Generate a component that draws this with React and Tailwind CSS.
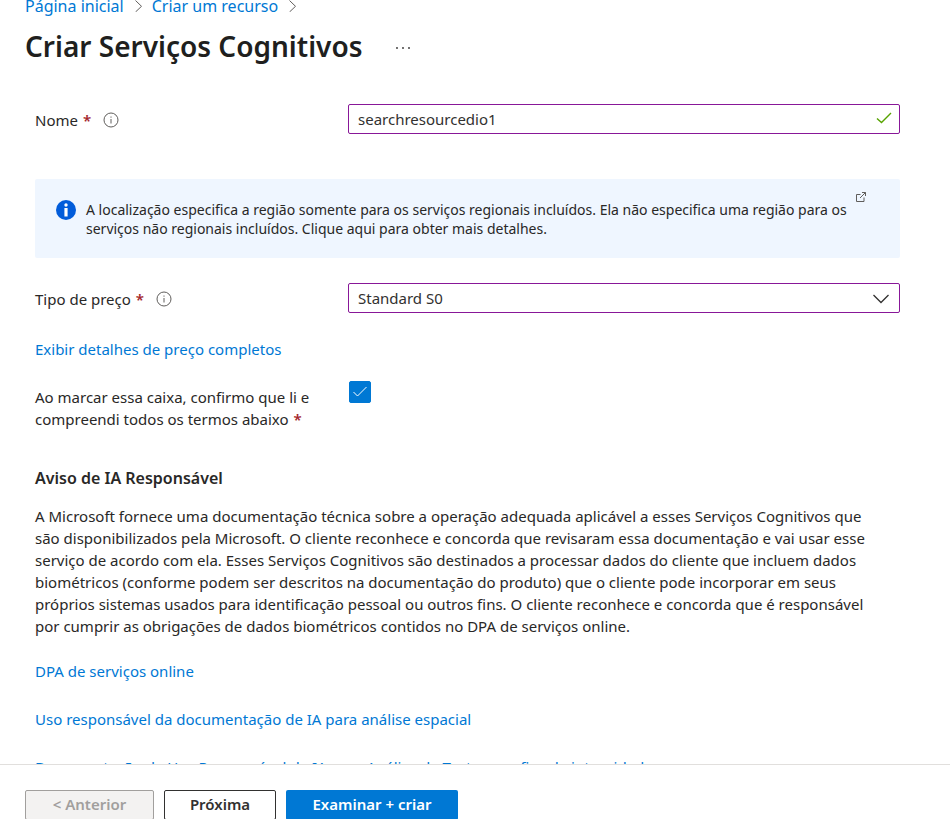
import React from "react";

const linkClass = "text-[#0078d4] hover:underline";

function Required() {
  return <span className="ml-[5px] font-semibold text-[#a4262c]">*</span>;
}

function InfoIcon() {
  return (
    <svg className="ml-3 size-4 shrink-0" viewBox="0 0 16 16" fill="none" stroke="#605e5c" aria-hidden="true">
      <circle cx="8" cy="8" r="7" />
      <path d="M8 7v4.5M8 4.5v1.2" />
    </svg>
  );
}

function Separator() {
  return (
    <svg className="mx-2 h-3 w-3 shrink-0" viewBox="0 0 12 12" fill="none" stroke="#605e5c" aria-hidden="true">
      <path d="M3.5 0.5L9.5 6.3L3.5 12" />
    </svg>
  );
}

function Field({ id, label, children }) {
  return (
    <div className="flex items-center">
      <div className="flex w-[313px] shrink-0 items-center pt-0.5">
        <label htmlFor={id}>
          {label}
          <Required />
        </label>
        <InfoIcon />
      </div>
      <div className="grid min-w-0 flex-1 items-center">{children}</div>
    </div>
  );
}

const fieldClass =
  "col-start-1 row-start-1 h-[30px] w-full appearance-none rounded-xs border border-[#881798] bg-white px-[9px] text-[15px] text-[#323130] outline-none";

export default function App() {
  return (
    <div className="flex h-screen flex-col overflow-hidden bg-white font-['Noto_Sans','Segoe_UI',sans-serif] text-[15px] leading-[22px] text-[#292827]">
      <header className="shrink-0 px-[25px]">
        <nav aria-label="Trilha" className="flex h-3 items-center text-base leading-3">
          <a href="#inicio" className={linkClass}>Página inicial</a>
          <Separator />
          <a href="#recurso" className={linkClass}>Criar um recurso</a>
          <Separator />
        </nav>
        <div className="mt-4 flex items-center gap-8">
          <h1 className="text-[28px] leading-9 font-semibold text-[#201f1e]">Criar Serviços Cognitivos</h1>
          <button type="button" aria-label="Mais opções" className="flex pt-1">
            <svg className="h-4 w-4" viewBox="0 0 16 16" fill="#323130" aria-hidden="true">
              <circle cx="2" cy="8" r="0.9" />
              <circle cx="8" cy="8" r="0.9" />
              <circle cx="14" cy="8" r="0.9" />
            </svg>
          </button>
        </div>
      </header>

      <main className="min-h-0 flex-1 overflow-hidden pt-10 pr-[50px] pl-[35px]">
        <Field id="nome" label="Nome">
          <input id="nome" type="text" defaultValue="searchresourcedio1" className={fieldClass} />
          <svg className="pointer-events-none col-start-1 row-start-1 mr-2 h-4 w-4 justify-self-end" viewBox="0 0 16 16" fill="none" stroke="#57a300" strokeWidth="1.4" aria-hidden="true">
            <path d="M1 7.5L5.5 11.5L15 2" />
          </svg>
        </Field>

        <div className="mt-[45px] flex rounded-xs bg-[#eff6ff] px-[21px] pt-[21px] pb-5">
          <svg className="size-5 shrink-0" viewBox="0 0 20 20" aria-hidden="true">
            <circle cx="10" cy="10" r="10" fill="#015cda" />
            <circle cx="10" cy="5" r="1.7" fill="#fff" />
            <path d="M8.4 8h3.2v8.5H8.4z" fill="#fff" />
          </svg>
          <p className="ml-2.5 text-sm leading-[19px]">
            A localização especifica a região somente para os serviços regionais incluídos. Ela não especifica uma região para os
            <br />
            serviços não regionais incluídos. Clique aqui para obter mais detalhes.
          </p>
          <a href="#detalhes" aria-label="Abrir em nova guia" className="-mt-2 ml-2 flex size-3 shrink-0">
            <svg className="size-3" viewBox="0 0 12 12" fill="none" stroke="#605e5c" aria-hidden="true">
              <path d="M5.5 2.5H1.5v7h7.5V5.5M7 0.5h3.5V4M10.5 0.5L5 6" />
            </svg>
          </a>
        </div>

        <div className="mt-[25px]">
          <Field id="preco" label="Tipo de preço">
            <select id="preco" className={fieldClass}>
              <option>Standard S0</option>
            </select>
            <svg className="pointer-events-none col-start-1 row-start-1 mr-[11px] h-4 w-4 justify-self-end" viewBox="0 0 16 16" fill="none" stroke="#323130" strokeWidth="1.3" aria-hidden="true">
              <path d="M0.5 5L8 12.5L15.5 5" />
            </svg>
          </Field>
        </div>

        <p className="mt-[25px]">
          <a href="#precos" className={linkClass}>Exibir detalhes de preço completos</a>
        </p>

        <div className="mt-[21px] flex items-start">
          <label htmlFor="termos" className="mt-[5px] w-[314px] shrink-0">
            Ao marcar essa caixa, confirmo que li e<br />
            compreendi todos os termos abaixo
            <Required />
          </label>
          <div className="grid items-center justify-items-center">
            <input id="termos" type="checkbox" defaultChecked className="peer col-start-1 row-start-1 size-[22px] appearance-none rounded-xs border border-[#323130] checked:border-[#0078d4] checked:bg-[#0078d4]" />
            <svg className="pointer-events-none col-start-1 row-start-1 size-4" viewBox="0 0 16 16" fill="none" stroke="#fff" aria-hidden="true">
              <path d="M1.5 8L5.5 12L14.5 3" />
            </svg>
          </div>
        </div>

        <h2 className="mt-[37px] text-base leading-[22px] font-semibold">Aviso de IA Responsável</h2>
        <p className="mt-4">
          A Microsoft fornece uma documentação técnica sobre a operação adequada aplicável a esses Serviços Cognitivos que
          <br />
          são disponibilizados pela Microsoft. O cliente reconhece e concorda que revisaram essa documentação e vai usar esse
          <br />
          serviço de acordo com ela. Esses Serviços Cognitivos são destinados a processar dados do cliente que incluem dados
          <br />
          biométricos (conforme podem ser descritos na documentação do produto) que o cliente pode incorporar em seus
          <br />
          próprios sistemas usados para identificação pessoal ou outros fins. O cliente reconhece e concorda que é responsável
          <br />
          por cumprir as obrigações de dados biométricos contidos no DPA de serviços online.
        </p>

        <ul className="mt-[23px] flex flex-col gap-[26px]">
          <li><a href="#dpa" className={linkClass}>DPA de serviços online</a></li>
          <li><a href="#espacial" className={linkClass}>Uso responsável da documentação de IA para análise espacial</a></li>
          <li><a href="#texto" className={linkClass}>Documentação de Uso Responsável de IA para Análise de Texto para fins de integridade</a></li>
        </ul>
      </main>

      <footer className="flex h-[55px] shrink-0 items-start gap-2.5 border-t border-[#e1dfdd] px-[25px] pt-[25px] font-semibold">
        <button type="button" disabled className="h-[30px] w-[129px] shrink-0 rounded-xs border border-[#a19f9d] bg-[#f3f2f1] pb-0.5 text-[#a19f9d]">&lt; Anterior</button>
        <button type="button" className="h-[30px] w-[112px] shrink-0 rounded-xs border border-[#323130] bg-white pb-0.5 text-[#323130]">Próxima</button>
        <button type="button" className="h-[30px] w-[172px] shrink-0 rounded-xs bg-[#0078d4] pb-0.5 text-white">Examinar + criar</button>
      </footer>
    </div>
  );
}
